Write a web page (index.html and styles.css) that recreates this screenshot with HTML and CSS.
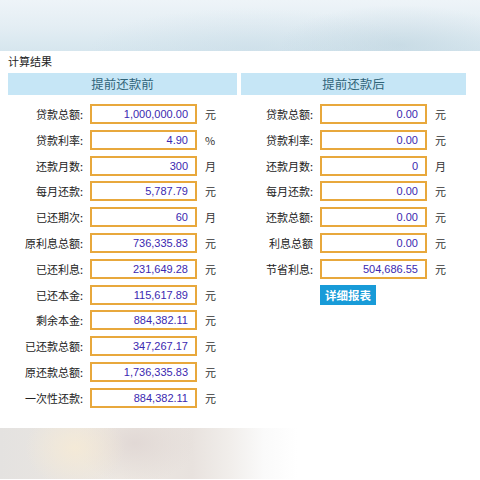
FILE: index.html
```html
<!DOCTYPE html>
<html lang="zh-CN">
<head>
<meta charset="utf-8">
<title>计算结果</title>
<link rel="stylesheet" href="styles.css">
</head>
<body>
<div class="banner"></div>
<div class="title">计算结果</div>
<div class="panels">
  <section class="panel panel-left">
    <h2 class="head">提前还款前</h2>
    <div class="rows">
      <div class="row"><span class="label">贷款总额:</span><span class="box">1,000,000.00</span><span class="unit">元</span></div>
      <div class="row"><span class="label">贷款利率:</span><span class="box">4.90</span><span class="unit">%</span></div>
      <div class="row"><span class="label">还款月数:</span><span class="box">300</span><span class="unit">月</span></div>
      <div class="row"><span class="label">每月还款:</span><span class="box">5,787.79</span><span class="unit">元</span></div>
      <div class="row"><span class="label">已还期次:</span><span class="box">60</span><span class="unit">月</span></div>
      <div class="row"><span class="label">原利息总额:</span><span class="box">736,335.83</span><span class="unit">元</span></div>
      <div class="row"><span class="label">已还利息:</span><span class="box">231,649.28</span><span class="unit">元</span></div>
      <div class="row"><span class="label">已还本金:</span><span class="box">115,617.89</span><span class="unit">元</span></div>
      <div class="row"><span class="label">剩余本金:</span><span class="box">884,382.11</span><span class="unit">元</span></div>
      <div class="row"><span class="label">已还款总额:</span><span class="box">347,267.17</span><span class="unit">元</span></div>
      <div class="row"><span class="label">原还款总额:</span><span class="box">1,736,335.83</span><span class="unit">元</span></div>
      <div class="row"><span class="label">一次性还款:</span><span class="box">884,382.11</span><span class="unit">元</span></div>
    </div>
  </section>
  <section class="panel panel-right">
    <h2 class="head">提前还款后</h2>
    <div class="rows">
      <div class="row"><span class="label">贷款总额:</span><span class="box">0.00</span><span class="unit">元</span></div>
      <div class="row"><span class="label">贷款利率:</span><span class="box">0.00</span><span class="unit">元</span></div>
      <div class="row"><span class="label">还款月数:</span><span class="box">0</span><span class="unit">月</span></div>
      <div class="row"><span class="label">每月还款:</span><span class="box">0.00</span><span class="unit">元</span></div>
      <div class="row"><span class="label">还款总额:</span><span class="box">0.00</span><span class="unit">元</span></div>
      <div class="row"><span class="label">利息总额</span><span class="box">0.00</span><span class="unit">元</span></div>
      <div class="row"><span class="label">节省利息:</span><span class="box">504,686.55</span><span class="unit">元</span></div>
      <div class="row row-btn"><span class="label"></span><span class="btn">详细报表</span></div>
    </div>
  </section>
</div>
<div class="shade"></div>
</body>
</html>
```
FILE: styles.css
```css
html, body {
  margin: 0;
  padding: 0;
  background: #ffffff;
}
body {
  width: 480px;
  height: 480px;
  overflow: hidden;
  font-family: "Noto Sans CJK SC", "Liberation Sans", sans-serif;
  color: #333;
}
.banner {
  height: 51px;
  background:
    radial-gradient(ellipse 120px 40px at 400px 45px, rgba(185, 208, 220, 0.5), rgba(185, 208, 220, 0)),
    radial-gradient(ellipse 160px 40px at 250px 48px, rgba(195, 216, 228, 0.4), rgba(195, 216, 228, 0)),
    linear-gradient(to bottom, #eef4f8 0%, #e4eef4 50%, #d6e6ee 100%);
}
.title {
  padding: 2px 8px 0;
  height: 18px;
  line-height: 16px;
  font-size: 11px;
  color: #222;
}
.panels {
  display: flex;
  gap: 4px;
  padding: 2px 8px 0;
}
.panel-left { width: 229px; }
.panel-right { width: 225px; }
.head {
  margin: 0;
  height: 22px;
  line-height: 22px;
  background: #c6e6f6;
  color: #2f6378;
  font-size: 12.5px;
  font-weight: normal;
  text-align: center;
}
.rows {
  display: flex;
  flex-direction: column;
  gap: 5.8px;
  margin-top: 9px;
}
.row {
  display: flex;
  align-items: center;
  height: 20px;
}
.label {
  width: 75px;
  margin-right: 7px;
  text-align: right;
  font-size: 11px;
  color: #222;
  white-space: nowrap;
}
.panel-right .label { width: 72px; }
.box {
  box-sizing: border-box;
  width: 107px;
  height: 20px;
  border: 2px solid #e8a83c;
  background: #fff;
  text-align: right;
  padding-right: 7px;
  line-height: 16px;
  font-family: "Liberation Sans", "DejaVu Sans", sans-serif;
  font-size: 11px;
  color: #3a28b0;
}
.unit {
  margin-left: 8px;
  font-size: 11px;
  color: #333;
}
.btn {
  display: inline-block;
  width: 56px;
  height: 20px;
  line-height: 20px;
  background: #189bd8;
  color: #fff;
  font-size: 11.5px;
  font-weight: bold;
  text-align: center;
}
.shade {
  margin-top: 20px;
  height: 51px;
  background:
    radial-gradient(ellipse 50px 40px at 75px 20px, rgba(245, 234, 214, 0.9), rgba(245, 234, 214, 0)),
    radial-gradient(ellipse 60px 40px at 135px 15px, rgba(224, 215, 212, 0.9), rgba(224, 215, 212, 0)),
    linear-gradient(to right, #e4e2e0 0%, #ede8e2 25%, #e8e2de 40%, #f1eeeb 48%, #fafafa 55%, #ffffff 62%);
}
```
